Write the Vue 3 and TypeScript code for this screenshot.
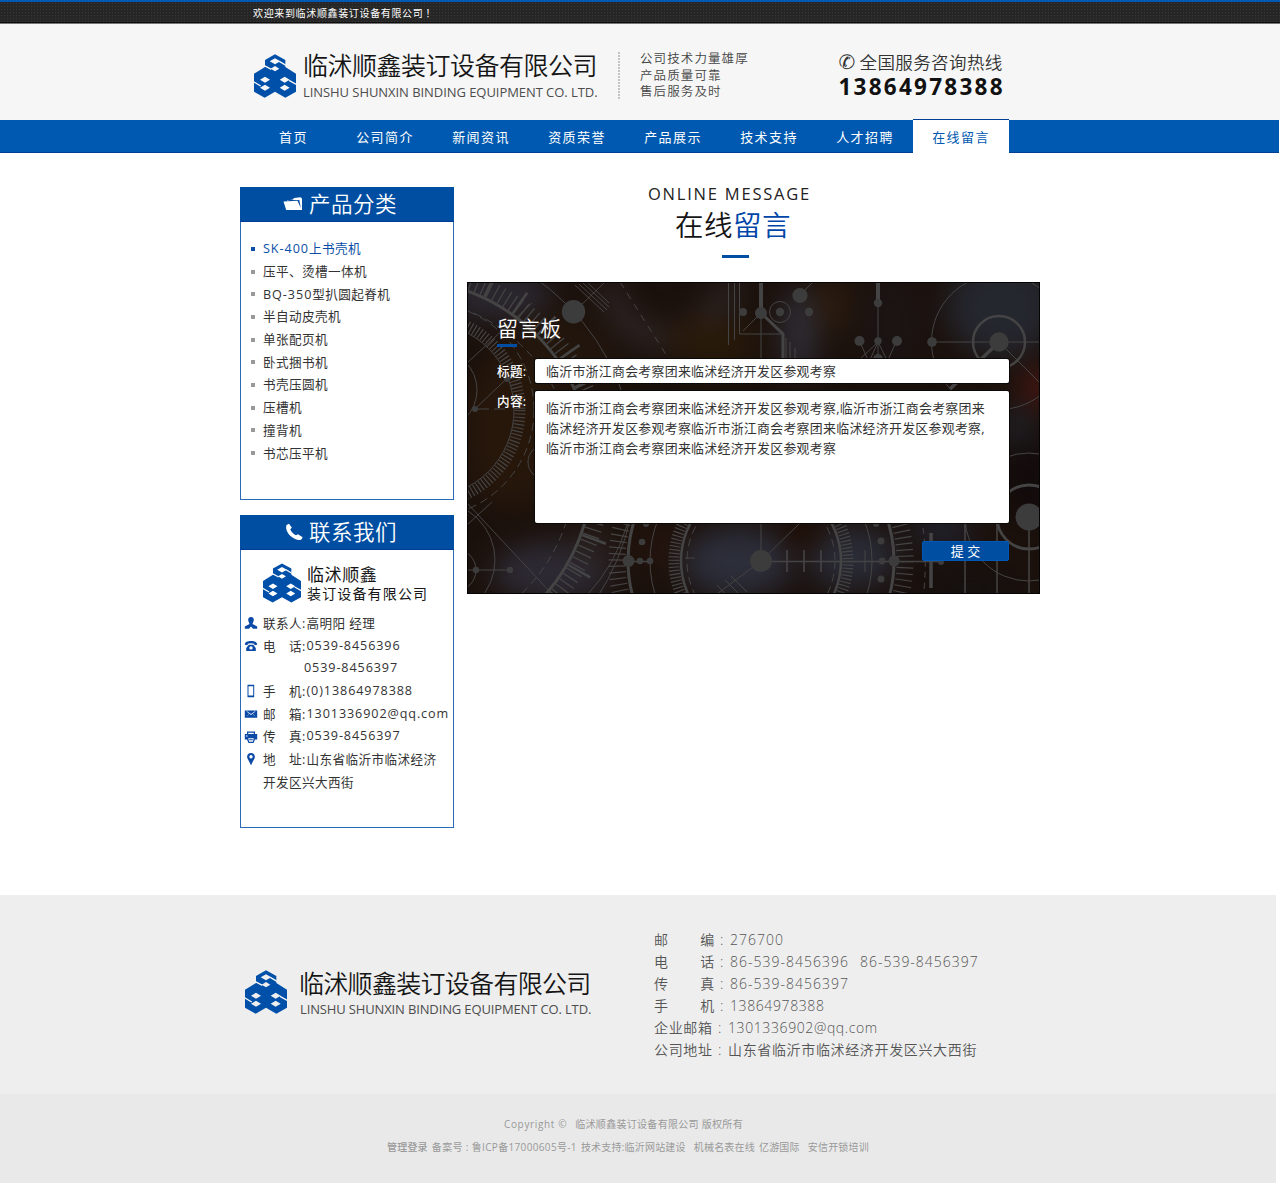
<script setup lang="ts">
interface ContactRow { icon: string; label: string; value: string; cls: string }

const nav: string[] = ['首页', '公司简介', '新闻资讯', '资质荣誉', '产品展示', '技术支持', '人才招聘', '在线留言']
const slogans: string[] = ['公司技术力量雄厚', '产品质量可靠', '售后服务及时']
const products: [string, string][] = [
  ['SK-400', '上书壳机'], ['', '压平、烫槽一体机'], ['BQ-350', '型扒圆起脊机'], ['', '半自动皮壳机'], ['', '单张配页机'],
  ['', '卧式捆书机'], ['', '书壳压圆机'], ['', '压槽机'], ['', '撞背机'], ['', '书芯压平机'],
]
const contacts: ContactRow[] = [
  { icon: 'user', label: '联系人:', value: '高明阳 经理', cls: 'cjk' },
  { icon: 'tel', label: '电　话:', value: '0539-8456396', cls: '' },
  { icon: '', label: '', value: '0539-8456397', cls: 'second' },
  { icon: 'mobile', label: '手　机:', value: '(0)13864978388', cls: '' },
  { icon: 'mail', label: '邮　箱:', value: '1301336902@qq.com', cls: 'mail' },
  { icon: 'fax', label: '传　真:', value: '0539-8456397', cls: '' },
  { icon: 'pin', label: '地　址:', value: '山东省临沂市临沭经济', cls: 'cjk' },
  { icon: '', label: '', value: '开发区兴大西街', cls: 'cjk' },
]
const footerRows = [
  { label: ['邮', '编'], values: ['276700'], cls: '' },
  { label: ['电', '话'], values: ['86-539-8456396', '86-539-8456397'], cls: '' },
  { label: ['传', '真'], values: ['86-539-8456397'], cls: '' },
  { label: ['手', '机'], values: ['13864978388'], cls: 'tight' },
  { label: ['企业邮箱'], values: ['1301336902@qq.com'], cls: 'wide tight' },
  { label: ['公司地址'], values: ['山东省临沂市临沭经济开发区兴大西街'], cls: 'wide cjk' },
]
const message: string[] = [
  '临沂市浙江商会考察团来临沭经济开发区参观考察,临沂市浙江商会考察团来',
  '临沭经济开发区参观考察临沂市浙江商会考察团来临沭经济开发区参观考察,',
  '临沂市浙江商会考察团来临沭经济开发区参观考察',
]
</script>

<template>
  <div class="page">
    <svg width="0" height="0" class="defs">
      <symbol id="logo" viewBox="0 0 126 130">
        <path fill="#0050aa" fill-rule="evenodd" d="M63 0 94 17V38L126 58V112L94 130 63 112 32 130 0 112V58L33 38V17Z
          M63 12 47 21 63 30 79 21Z M63 35 50 43 63 51 76 43Z
          M33 67 18 76 33 85 48 76Z M33 91 18 100 33 109 48 100Z
          M92 67 77 76 92 85 107 76Z M92 91 77 100 92 109 107 100Z"/>
        <path class="slit" d="M31 34 52 45M76 21 96 33M-2 82 20 95M105 78 128 91"/>
      </symbol>
    </svg>

    <div class="topbar"><div class="wrap">欢迎来到临沭顺鑫装订设备有限公司<i>！</i></div></div>

    <header class="header">
      <div class="wrap head-row">
        <svg class="logo"><use href="#logo"/></svg>
        <div class="brand">
          <div class="brand-cn">临沭顺鑫装订设备有限公司</div>
          <div class="brand-en">LINSHU SHUNXIN BINDING EQUIPMENT CO. LTD.</div>
        </div>
        <div class="divider"></div>
        <div class="slogans"><div v-for="s in slogans" :key="s">{{ s }}</div></div>
        <div class="hotline">
          <div class="hot-title"><span class="phone">✆</span>全国服务咨询热线</div>
          <div class="hot-num">13864978388</div>
        </div>
      </div>
    </header>

    <nav class="nav">
      <div class="nav-row">
        <a v-for="(n, i) in nav" :key="n" :class="{ active: i === 7, first: i === 0 }">{{ n }}</a>
      </div>
    </nav>

    <main class="main">
      <aside class="side">
        <section class="box">
          <h2>
            <svg width="20" height="16" viewBox="0 0 20 16"><path fill="#fff" d="M4 4.500 10 3.500 11 2 17.500 1.300 19 2.500V14H3.200L.5 5.500 14.500 4.800 17.800 12 16.300 4H4Z"/></svg>
            <span>产品分类</span>
          </h2>
          <ul class="products">
            <li v-for="(p, i) in products" :key="i" :class="{ on: i === 0 }"><span class="model">{{ p[0] }}</span>{{ p[1] }}</li>
          </ul>
        </section>

        <section class="box">
          <h2>
            <svg width="20" height="18" viewBox="0 0 20 18"><path fill="#fff" d="M3.500 2 6 .8 8.800 4.600 7.300 6.500C8.200 8.700 10.500 11 13 12.300L15 11.200 19.700 14.300 18.400 16.500C15.500 18 11.500 16.200 8.500 13.800 5 11 2 6.500 3.500 2Z"/></svg>
            <span>联系我们</span>
          </h2>
          <div class="mini">
            <svg class="mini-logo"><use href="#logo"/></svg>
            <div><div class="m1">临沭顺鑫</div><div class="m2">装订设备有限公司</div></div>
          </div>
          <div v-for="(c, i) in contacts" :key="i" class="crow" :class="c.cls">
            <span class="ico">
              <svg v-if="c.icon" width="14" height="14" viewBox="0 0 14 14" fill="#0a4aa6">
                <path v-if="c.icon === 'user'" d="M7 1C9 1 10 2.300 9.800 4.300 9.700 5.800 8.800 6.500 8.500 8L13.200 10.500V12.800H9L7 10.500 5 12.800H.8V10.500L5.500 8C5.200 6.500 4.300 5.800 4.200 4.300 4 2.300 5 1 7 1Z"/>
                <path v-if="c.icon === 'tel'" fill-rule="evenodd" d="M.8 5.800C.8 3 3.500 2 7 2s6.200 1 6.200 3.800L10.300 6.200V4.700C8 4 6 4 3.700 4.700V6.200ZM4.800 5.800H9.200L11.800 9V12H2.200V9ZM7 7.200A1.700 1.700 0 1 0 7 10.600 1.700 1.700 0 1 0 7 7.200Z"/>
                <path v-if="c.icon === 'mobile'" fill-rule="evenodd" d="M3.500.8H10.200V13.200H3.500ZM4.500 2.300V11.500H9.200V2.300Z"/>
                <path v-if="c.icon === 'mail'" fill-rule="evenodd" d="M.8 3.500H13.200V10.700H.8ZM2.500 4.500 7 8 11.500 4.500 11 4.300 7 7 3 4.300ZM2.200 9.800 5 7.500 4.700 7.200ZM11.800 9.800 9 7.500 9.300 7.200Z"/>
                <path v-if="c.icon === 'fax'" fill-rule="evenodd" d="M3 1.500H11V4H13.200V9.500H11L9.500 13H4.500L3 9.500H.8V4H3ZM4.200 2.700V4H9.800V2.700ZM4.200 8.200 5.200 11.800H8.800L9.800 8.200ZM5.200 9.300H8.800V10.300H5.200ZM2 5.500V6.500H3.500V5.500Z"/>
                <path v-if="c.icon === 'pin'" fill-rule="evenodd" d="M7 1C9.300 1 10.900 2.600 10.900 4.700 10.900 7.300 8.300 9 7.500 12.800H6.500C5.700 9 3.100 7.300 3.100 4.700 3.100 2.600 4.700 1 7 1ZM7 3A1.700 1.700 0 1 0 7 6.400 1.700 1.700 0 1 0 7 3Z"/>
              </svg>
            </span>
            <span v-if="c.label" class="lab">{{ c.label }}</span>
            <span class="val">{{ c.value }}</span>
          </div>
        </section>
      </aside>

      <section class="content">
        <div class="title-en">ONLINE MESSAGE</div>
        <div class="title-cn">在线<em>留言</em></div>
        <div class="bar"></div>

        <div class="panel">
          <svg class="art" viewBox="0 0 573 312" width="573" height="312">
            <defs><filter id="soft" x="-50%" y="-50%" width="200%" height="200%" color-interpolation-filters="sRGB"><feGaussianBlur stdDeviation="14"/></filter></defs>
            <rect width="573" height="312" fill="#1b110c"/>
            <g filter="url(#soft)">
              <ellipse cx="30" cy="12" rx="55" ry="26" fill="#2b2831"/>
              <ellipse cx="90" cy="70" rx="60" ry="40" fill="#22160d"/>
              <path d="M140 0Q165 75 215 50T262 0" fill="none" stroke="#352d31" stroke-width="16"/>
              <ellipse cx="245" cy="60" rx="45" ry="24" fill="#291a0a"/>
              <ellipse cx="332" cy="50" rx="18" ry="45" fill="#2e2d36"/>
              <ellipse cx="365" cy="22" rx="20" ry="30" fill="#2a1b0e"/>
              <ellipse cx="425" cy="40" rx="35" ry="50" fill="#1b1413"/>
              <ellipse cx="535" cy="25" rx="55" ry="50" fill="#25272f"/>
              <ellipse cx="572" cy="105" rx="18" ry="20" fill="#481713"/>
              <ellipse cx="550" cy="145" rx="15" ry="20" fill="#20232b"/>
              <ellipse cx="562" cy="200" rx="25" ry="40" fill="#120b0b"/>
              <ellipse cx="45" cy="150" rx="50" ry="75" fill="#27170b"/>
              <ellipse cx="85" cy="290" rx="60" ry="30" fill="#2d2a34"/>
              <ellipse cx="125" cy="265" rx="22" ry="18" fill="#2b2220"/>
              <ellipse cx="190" cy="265" rx="28" ry="28" fill="#22130d"/>
              <ellipse cx="270" cy="280" rx="55" ry="35" fill="#2c2e3a"/>
              <ellipse cx="385" cy="275" rx="45" ry="30" fill="#2a2c37"/>
              <ellipse cx="335" cy="255" rx="24" ry="14" fill="#1f0d05"/>
              <ellipse cx="475" cy="248" rx="32" ry="16" fill="#222431"/>
              <ellipse cx="500" cy="305" rx="60" ry="18" fill="#15100f"/>
              <ellipse cx="360" cy="312" rx="50" ry="8" fill="#1b1210"/>
            </g>
            <g fill="none" stroke="#454444" stroke-width="1">
              <circle cx="-64.600" cy="187.600" r="190" stroke-width="3"/>
              <circle cx="-64.600" cy="187.600" r="200" stroke-width="17" stroke-dasharray="1.300 5.400"/>
              <circle cx="-64.600" cy="187.600" r="204" stroke-width="25" stroke-dasharray="2.500 32.500"/>
              <circle cx="-64.600" cy="187.600" r="172" stroke-dasharray="8 5"/>
              <circle cx="-64.600" cy="187.600" r="233"/>
              <circle cx="-40" cy="128" r="87"/>
              <circle cx="-40" cy="128" r="93" stroke-width="11" stroke-dasharray="1.200 2.300"/>
              <circle cx="-40" cy="128" r="107" stroke-dasharray="8 5"/>
              <circle cx="-30" cy="108" r="40"/>
              <circle cx="78" cy="180" r="17"/>
              <path d="M0 81 65 21M8 127 56 81M108 3 137 30M112 2 140 28M116 1 142 25M120 0 142 21M108 29 138 0"/>
              <path d="M8 127H38" stroke-dasharray="14 5"/>
              <path d="M153 0 205 82" stroke-dasharray="7 6"/>
              <path d="M261.500 0V63M267.500 0V58M272.500 0V52H316M276 49 294 31V80M319 56V80M323 60V80M328 66V80"/>
              <path d="M294 0V30M411 0V21" stroke-width="4"/>
              <path d="M294 31 316 52V80" stroke-width="3"/>
              <circle cx="313" cy="30" r="10.500"/>
              <path d="M333 13 346 0M411 21V80M392 58 402 80M430 58 420 80M392 78 411 60 402 80M411 60 420 78"/>
              <circle cx="532" cy="60" r="67.500"/><circle cx="532" cy="60" r="26" stroke-width="2.500"/>
              <path d="M465 60H573M532 60 573 101"/><path d="M532 60 483 107" stroke-width="3.500"/>
              <circle cx="562" cy="235" r="32" stroke-width="2.800"/><circle cx="562" cy="235" r="64"/>
              <path d="M562 235V312M498 240V312M530 240V312" stroke-width="1.500"/>
              <path d="M464 251V306" stroke-width="3.500"/>
              <path d="M456 246Q460 275 457 308" stroke-dasharray="6 5"/>
              <path d="M161 279.500H183M294 279.500H474" stroke-width="1.500"/>
              <path d="M294 279V240M294 279 334 240"/>
              <path d="M320 268V290M337 268V290M354 268V290" stroke-width="1.600"/><path d="M398 268V290"/>
              <circle cx="294" cy="279" r="133" stroke-width="3"/>
              <circle cx="294" cy="279" r="144" stroke-width="17" stroke-dasharray="1.200 5"/>
              <circle cx="294" cy="279" r="111"/>
              <circle cx="294" cy="279" r="80" stroke-width="2.500"/>
              <circle cx="294" cy="279" r="87" stroke-width="11" stroke-dasharray="1.200 2.300"/>
              <circle cx="294" cy="279" r="74" stroke-dasharray="8 5"/>
              <path d="M160 243Q148 283 121 312M0 221 85 312M0 243 25 220M0 288H43M250 303 264 318M258 298 272 312M264 294 280 310M250 312 294 279M218 276H228"/>
              <circle cx="-30" cy="278" r="58"/><circle cx="-12" cy="288" r="21"/>
            </g>
            <g fill="#3d3c3c">
              <circle cx="106.500" cy="29.700" r="11.700"/><circle cx="276" cy="30" r="4"/><circle cx="294" cy="31" r="6"/>
              <circle cx="313" cy="30" r="4.200"/><circle cx="342" cy="30" r="4.200"/><circle cx="333" cy="13.500" r="7.600"/>
              <circle cx="411" cy="21" r="4.200"/><circle cx="392.500" cy="59" r="5"/><circle cx="411" cy="59" r="3.700"/><circle cx="430" cy="59" r="5"/><circle cx="411" cy="77" r="5"/>
              <circle cx="532" cy="60" r="9.700"/><circle cx="465" cy="60" r="4.800"/><circle cx="562" cy="235" r="13.500"/>
              <circle cx="294" cy="279" r="11"/><circle cx="427" cy="279" r="5.500"/><circle cx="474" cy="280" r="3"/>
              <circle cx="409" cy="242" r="3"/><circle cx="414" cy="259" r="3.500"/><circle cx="415" cy="279" r="3.500"/><circle cx="414" cy="297" r="3.500"/>
              <circle cx="161.500" cy="279" r="6"/><circle cx="173" cy="279" r="3.300"/><circle cx="183" cy="279" r="3.300"/><circle cx="175" cy="260" r="3.300"/><circle cx="179" cy="242" r="3"/>
              <circle cx="9" cy="288" r="3.200"/><circle cx="43" cy="288" r="3.200"/><circle cx="8" cy="127" r="3"/><circle cx="40" cy="97" r="3"/>
            </g>
            <rect x=".5" y=".5" width="572" height="311" fill="none" stroke="#050404"/>
          </svg>
          <form class="form">
            <h3>留言板</h3>
            <div class="under"></div>
            <div class="field"><label>标题:</label><div class="input">临沂市浙江商会考察团来临沭经济开发区参观考察</div></div>
            <div class="field"><label class="up">内容:</label><div class="input area"><div v-for="m in message" :key="m">{{ m }}</div></div></div>
            <button type="button" class="submit">提 交</button>
          </form>
        </div>
      </section>
    </main>

    <footer>
      <div class="foot">
        <div class="foot-row">
          <svg class="logo"><use href="#logo"/></svg>
          <div class="brand">
            <div class="brand-cn">临沭顺鑫装订设备有限公司</div>
            <div class="brand-en">LINSHU SHUNXIN BINDING EQUIPMENT CO. LTD.</div>
          </div>
          <div class="foot-info">
            <div v-for="(r, i) in footerRows" :key="i" class="frow" :class="r.cls">
              <span class="flab"><i v-for="l in r.label" :key="l">{{ l }}</i></span>
              <span class="colon">:</span>
              <span v-for="v in r.values" :key="v" class="fval">{{ v }}</span>
            </div>
          </div>
        </div>
      </div>
      <div class="copy">
        <div class="line l1"><span class="cr">Copyright ©</span><span>临沭顺鑫装订设备有限公司 版权所有</span></div>
        <div class="line l2">
          <b>管理登录</b><span class="icp">备案号 : 鲁ICP备17000605号-1</span><span>技术支持:临沂网站建设</span>
          <span class="gap">机械名表在线</span><span>亿游国际</span><span class="gap">安信开锁培训</span>
        </div>
      </div>
    </footer>
  </div>
</template>

<style>
body { margin: 0; background: #fff; }
</style>

<style scoped>
.page { width: 1280px; height: 1183px; overflow: hidden; background: #fff; font-family: "Open Sans", "Noto Sans CJK SC", sans-serif; color: #333; white-space: nowrap; }
.page * { box-sizing: border-box; }
.defs { display: block; }
.slit { fill: none; stroke: #f8f8f8; stroke-width: 4; }
.wrap { width: 800px; margin: 0 auto; }
.topbar { height: 24px; border-top: 2px solid #0059b2; border-bottom: 1px solid #777; background-color: #262626; background-image: radial-gradient(#383838 0.7px, transparent 0.8px); background-size: 3px 3px; box-shadow: inset 0 -1px #0c0c0c; }
.topbar .wrap { padding-left: 13px; font-size: 10px; letter-spacing: .65px; line-height: 22px; color: #fff; }
.topbar i { font-style: normal; margin-left: 2px; }
.header { height: 96px; background: #f6f6f6; }
.head-row { display: flex; align-items: flex-start; padding-left: 14px; }
.logo { width: 42px; height: 44px; flex: none; }
.head-row .logo { margin-top: 30px; }
.brand { width: 294px; margin: 24px 0 0 7px; flex: none; }
.brand-cn { font-size: 25px; font-weight: 350; letter-spacing: -.5px; line-height: 34px; color: #151515; }
.brand-en { font-size: 13px; letter-spacing: -.06px; line-height: 20px; color: #4d4d4d; }
.divider { width: 2px; height: 48px; margin: 28px 0 0 21px; background: repeating-linear-gradient(#c4c4c4 0 2px, #f6f6f6 2px 3px); }
.slogans { width: 198.500px; margin: 27px 0 0 20px; font-size: 12.500px; font-weight: 350; letter-spacing: 1.100px; line-height: 16.500px; color: #444; }
.hotline { margin-top: 26px; color: #333; }
.hot-title { display: flex; font-size: 17.500px; letter-spacing: .4px; line-height: 24px; font-weight: 350; }
.phone { width: 21px; font: 20px/25px "DejaVu Sans", sans-serif; letter-spacing: 0; }
.hot-num { font-size: 22.500px; font-weight: 700; letter-spacing: 2.250px; line-height: 23px; color: #111; }
.nav { width: 1279px; height: 33px; background: #0059b0; border-bottom: 1px solid #003d94; }
.nav-row { display: flex; margin-left: 241px; }
.nav a { width: 96px; text-align: center; font-size: 13px; line-height: 35px; letter-spacing: 1.400px; color: #fff; }
.nav a.first { padding-left: 9px; }
.nav a.active { height: 35px; margin-top: -1px; background: #fff; border-top: 1px solid #003d94; color: #0059b0; }
.main { display: flex; width: 800px; height: 742px; margin: 0 auto; padding-top: 34px; }
.side { width: 213.500px; }
.box { height: 313px; margin-bottom: 15px; border: 1px solid #2a6bb8; border-top: 0; }
.box h2 { display: flex; align-items: center; height: 35px; margin: 0 -1px; padding-left: 43px; background: #004ea2; border-bottom: 1px solid #003c96; font-size: 21.500px; line-height: 33px; font-weight: 350; color: #fff; letter-spacing: .5px; }
.box h2 span { margin-top: -2px; }
.box h2 svg { margin-right: 6px; }
.products { list-style: none; margin: 15px 0 0; padding: 1px 0 0 10px; }
.products li { display: flex; align-items: center; height: 22.700px; font-size: 12.600px; letter-spacing: .4px; line-height: 20px; }
.products li::before { content: ""; width: 4px; height: 4px; margin: -1px 8px 0 0; background: #999; }
.model { letter-spacing: .95px; }
.products .on { color: #0a4ea6; }
.products .on::before { background: #0a4ea6; }
.mini { display: flex; height: 61px; padding: 12px 0 0 22px; color: #151515; }
.mini-logo { width: 38px; height: 42px; margin-right: 6px; }
.m1 { font-size: 17px; letter-spacing: .6px; line-height: 26px; }
.m2 { font-size: 14px; letter-spacing: 1.150px; line-height: 12px; }
.crow { display: flex; align-items: center; height: 22.700px; font-size: 12.600px; }
.ico { display: flex; width: 19px; margin: 2px 0 0 3px; }
.lab { width: 43.500px; letter-spacing: .4px; }
.val { letter-spacing: .9px; }
.cjk .val { letter-spacing: .4px; }
.second .val { margin-left: 41px; }
.content { width: 573px; margin-left: 13.500px; }
.title-en { margin: -5px 0 0 181px; font-size: 16.500px; line-height: 24px; letter-spacing: 1.780px; color: #222; }
.title-cn { margin: 1px 0 0 208px; font-size: 28.500px; line-height: 36px; font-weight: 350; letter-spacing: .5px; color: #151515; }
.title-cn em { font-style: normal; color: #0046a8; }
.bar { width: 27px; height: 3px; margin: 12px 0 0 255px; background: #004ea2; }
.panel { display: grid; height: 312px; margin-top: 24px; }
.art, .form { grid-area: 1 / 1; }
.art { display: block; }
.form { position: relative; padding: 31px 31px 0 30px; color: #fff; }
.form h3 { margin: 0; font-size: 21px; line-height: 30px; font-weight: 350; letter-spacing: .6px; }
.under { width: 20px; height: 3px; margin: 1px 0 12px; background: #004ea2; }
.field { display: flex; align-items: flex-start; margin-bottom: 8px; }
.field label { width: 38px; height: 24px; font-size: 12.600px; line-height: 25px; letter-spacing: .3px; font-weight: 500; }
.field .up { line-height: 22px; }
.input { width: 474px; height: 24px; padding-left: 11px; background: #fff; border-radius: 2px; color: #333; font-size: 12.900px; letter-spacing: .3px; line-height: 24px; box-shadow: 0 0 0 1px #0b0908; }
.area { height: 132px; padding-top: 6.500px; line-height: 20px; }
.submit { display: block; width: 87px; height: 20px; margin: 18px 0 0 425px; padding: 0; border: 1px solid #0059b8; border-radius: 2px; background: #004ea2; color: #fff; font: 13px/17px "Open Sans", "Noto Sans CJK SC", sans-serif; }
footer { width: 1276px; }
.foot { height: 199px; background: #eee; }
.foot-row { display: flex; width: 800px; margin-left: 240px; padding-left: 5px; }
.foot-row .logo { margin-top: 75px; }
.foot-row .brand { margin: 71px 0 0 13px; width: 291px; }
.foot-row .brand-cn { margin-left: -1px; letter-spacing: -.7px; }
.foot-row .brand-en { letter-spacing: -.14px; line-height: 18px; }
.foot-info { margin: 34px 0 0 63px; color: #555; font-size: 14px; font-weight: 350; letter-spacing: .65px; }
.frow { display: flex; height: 22px; line-height: 22px; }
.flab { display: flex; justify-content: space-between; width: 61px; }
.flab i { font-style: normal; }
.colon { width: 15px; padding-left: 5px; }
.wide .colon { width: 13px; padding-left: 3px; }
.fval { margin-right: 11px; letter-spacing: 1px; font-weight: 350; }
.tight .fval { letter-spacing: .6px; }
.cjk .fval { letter-spacing: .65px; }
.copy { height: 89px; padding-top: 19px; background: #e9e9e9; color: #999; font-size: 10px; letter-spacing: .25px; }
.line { display: flex; height: 23px; line-height: 23px; }
.l1 { padding-left: 504px; gap: 8px; letter-spacing: .3px; }
.cr { letter-spacing: .65px; }
.l2 { padding-left: 387px; gap: 4px; letter-spacing: .2px; }
.l2 b { font-weight: 500; }
.icp { letter-spacing: .34px; }
.l2 .gap { margin-left: 4px; }
</style>
